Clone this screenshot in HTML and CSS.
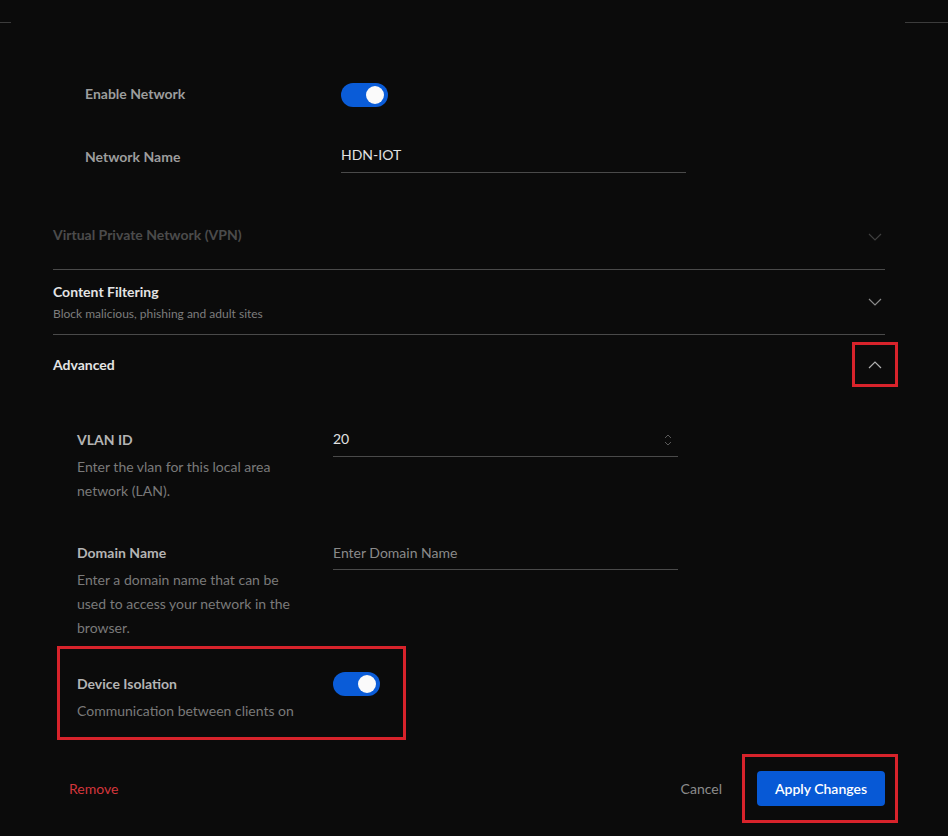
FILE: index.html
```html
<!DOCTYPE html>
<html>

<head>
    <title>Network settings</title>
    <link rel="stylesheet" href="styles.css">
</head>

<body>
    <div class="topline">
        <span class="seg left"></span>
        <span class="seg right"></span>
    </div>

    <div class="form">
        <div class="basic">
            <div class="field-row">
                <div class="field-label">Enable Network</div>
                <div class="toggle on"><span class="knob"></span></div>
            </div>
            <div class="field-row">
                <div class="field-label">Network Name</div>
                <div class="text-input"><span class="value">HDN-IOT</span></div>
            </div>
        </div>

        <div class="section vpn">
            <div class="section-text">
                <div class="section-title">Virtual Private Network (VPN)</div>
            </div>
            <div class="chev">
                <svg width="14" height="8" viewBox="0 0 14 8"><path d="M1 1 L7 7 L13 1" fill="none" stroke="currentColor" stroke-width="1.2"/></svg>
            </div>
        </div>

        <div class="section filtering">
            <div class="section-text">
                <div class="section-title">Content Filtering</div>
                <div class="section-sub">Block malicious, phishing and adult sites</div>
            </div>
            <div class="chev">
                <svg width="14" height="8" viewBox="0 0 14 8"><path d="M1 1 L7 7 L13 1" fill="none" stroke="currentColor" stroke-width="1.2"/></svg>
            </div>
        </div>

        <div class="section advanced">
            <div class="section-text">
                <div class="section-title">Advanced</div>
            </div>
            <div class="chev-box">
                <svg width="14" height="8" viewBox="0 0 14 8"><path d="M1 7 L7 1 L13 7" fill="none" stroke="currentColor" stroke-width="1.2"/></svg>
            </div>
        </div>

        <div class="adv-body">
            <div class="adv-row">
                <div class="adv-info">
                    <div class="adv-title">VLAN ID</div>
                    <div class="adv-desc">Enter the vlan for this local area network (LAN).</div>
                </div>
                <div class="text-input number">
                    <span class="value">20</span>
                    <svg class="spin" width="8" height="14" viewBox="0 0 8 14"><path d="M1 5 L4 2 L7 5 M1 9 L4 12 L7 9" fill="none" stroke="currentColor" stroke-width="1"/></svg>
                </div>
            </div>

            <div class="adv-row">
                <div class="adv-info">
                    <div class="adv-title">Domain Name</div>
                    <div class="adv-desc">Enter a domain name that can be used to access your network in the browser.</div>
                </div>
                <div class="text-input"><span class="placeholder">Enter Domain Name</span></div>
            </div>

            <div class="highlight isolation">
                <div class="adv-info">
                    <div class="adv-title">Device Isolation</div>
                    <div class="adv-desc">Communication between clients on</div>
                </div>
                <div class="toggle on"><span class="knob"></span></div>
            </div>
        </div>

        <div class="footer">
            <span class="remove">Remove</span>
            <div class="actions">
                <span class="cancel">Cancel</span>
                <div class="highlight apply-box">
                    <button class="apply">Apply Changes</button>
                </div>
            </div>
        </div>
    </div>
</body>
</html>
```

FILE: styles.css
```css
body {
    margin: 0;
    background-color: #0b0b0b;
    font-family: Lato, "Open Sans", sans-serif;
    font-size: 14px;
    color: #dcdcdc;
}

.topline {
    display: flex;
    justify-content: space-between;
    padding-top: 22px;
}

.topline .seg {
    display: block;
    height: 1px;
    background-color: #3c3c3c;
}

.topline .left {
    width: 11px;
}

.topline .right {
    width: 43px;
}

.form {
    width: 832px;
    margin-left: 53px;
}

/* basic fields */

.basic {
    padding-left: 32px;
    padding-top: 60px;
}

.field-row {
    display: flex;
    align-items: center;
    margin-bottom: 32px;
}

.field-row:last-child {
    margin-bottom: 0;
}

.field-label {
    width: 256px;
    padding-bottom: 4px;
    font-weight: 700;
    color: #9d9d9d;
}

.field-row:last-child .field-label {
    padding-bottom: 0;
}

.text-input {
    width: 345px;
    height: 33px;
    display: flex;
    align-items: center;
    justify-content: space-between;
    border-bottom: 1px solid #4a4a4a;
    box-sizing: content-box;
}

.text-input .value {
    color: #e2e2e2;
    padding-bottom: 2px;
}

.text-input .placeholder {
    color: #8a8a8a;
}

.text-input .spin {
    color: #5a5a5a;
    margin-right: 6px;
}

.toggle {
    width: 47px;
    height: 24px;
    border-radius: 12px;
    background-color: #3a3a3a;
    position: relative;
}

.toggle.on {
    background-color: #0a5cd8;
}

.toggle .knob {
    position: absolute;
    top: 3px;
    right: 4px;
    width: 18px;
    height: 18px;
    border-radius: 50%;
    background-color: #fafafa;
}

/* accordion sections */

.section {
    display: flex;
    align-items: center;
    justify-content: space-between;
    border-bottom: 1px solid #4a4a4a;
}

.section.vpn {
    margin-top: 28px;
    height: 68px;
}

.section.filtering {
    height: 64px;
}

.section.advanced {
    height: 62px;
    border-bottom: none;
}

.section-title {
    font-weight: 700;
    color: #e4e4e4;
}

.vpn .section-title {
    color: #4b4b4b;
    padding-bottom: 2px;
}

.filtering .section-text {
    padding-bottom: 1px;
}

.advanced .section-title {
    padding-bottom: 4px;
}

.section-sub {
    margin-top: 6px;
    font-size: 12px;
    color: #7d7d7d;
}

.chev {
    width: 20px;
    display: flex;
    justify-content: center;
    color: #8a8a8a;
}

.vpn .chev {
    color: #3f3f3f;
    margin-top: 4px;
}

.chev-box {
    width: 40px;
    height: 39px;
    margin-right: -13px;
    margin-top: -3px;
    border: 3px solid #d8232b;
    display: flex;
    align-items: center;
    justify-content: center;
    color: #b0b0b0;
}

/* advanced body */

.adv-body {
    padding-top: 26px;
}

.adv-row {
    display: flex;
    padding-left: 24px;
    margin-bottom: 33px;
}

.adv-info {
    width: 256px;
    padding-top: 7px;
}

.adv-title {
    font-weight: 700;
    line-height: 20px;
    color: #b4b4b4;
}

.adv-desc {
    margin-top: 5px;
    line-height: 24px;
    color: #7a7a7a;
    width: 222px;
}

.highlight {
    border: 3px solid #d8232b;
}

.isolation {
    display: inline-flex;
    align-items: flex-start;
    margin-top: -27px;
    margin-left: 4px;
    padding: 18px 23px 14px 17px;
}

.isolation .toggle {
    margin-top: 5px;
}

/* footer */

.footer {
    display: flex;
    align-items: center;
    justify-content: space-between;
    margin-top: 14px;
    margin-right: -13px;
    padding-left: 16px;
}

.remove {
    color: #d3363c;
}

.actions {
    display: flex;
    align-items: center;
}

.cancel {
    color: #8c8c8c;
    margin-right: 20px;
}

.apply-box {
    padding: 14px 10px 14px 12px;
}

.apply {
    width: 128px;
    height: 35px;
    border: 0;
    border-radius: 4px;
    background-color: #0759d6;
    color: #ffffff;
    font-family: Lato, sans-serif;
    font-size: 14px;
    font-weight: 600;
}
```
